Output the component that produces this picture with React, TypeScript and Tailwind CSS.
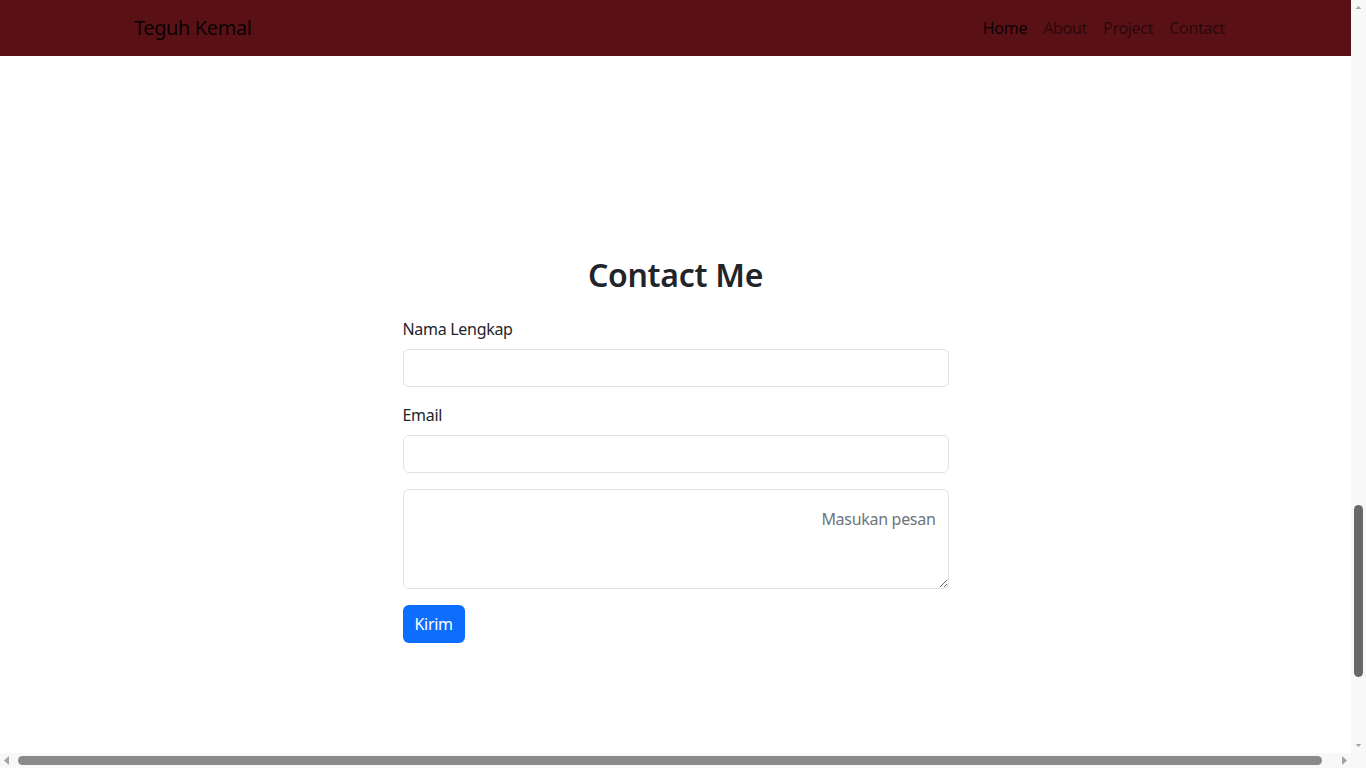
import React from "react";

export default function App() {
  const font = { fontFamily: '"Noto Sans", "Open Sans", sans-serif' };
  return (
    <div className="w-screen h-screen overflow-hidden flex flex-col bg-white" style={font}>
      <div className="flex flex-1 min-h-0">
        <div className="flex-1 flex flex-col min-w-0">
          <nav className="h-[56px] bg-[#5a1116] flex items-center justify-between pl-[134px] pr-[118px]">
            <span className="text-[20px] text-black/90 leading-none tracking-[-0.4px]">Teguh Kemal</span>
            <div className="flex text-[16px] tracking-[-0.3px]">
              <a className="px-2 text-black/90">Home</a>
              <a className="px-2 text-black/[0.55]">About</a>
              <a className="px-2 text-black/[0.55]">Project</a>
              <a className="px-2 text-black/[0.55]">Contact</a>
            </div>
          </nav>
          <main className="flex justify-center pt-[200px]">
            <div className="w-[546px] flex flex-col">
              <h2 className="text-[32px] leading-[1.2] font-semibold text-[#212529] text-center mb-[23px] tracking-[-0.3px]">Contact Me</h2>
              <label className="text-[16px] leading-[24px] text-[#212529] mb-2 tracking-[-0.3px]">Nama Lengkap</label>
              <input className="h-[38px] border border-[#dee2e6] rounded-[6px] mb-4 px-3 outline-none" />
              <label className="text-[16px] leading-[24px] text-[#212529] mb-2 tracking-[-0.3px]">Email</label>
              <input className="h-[38px] border border-[#dee2e6] rounded-[6px] mb-4 px-3 outline-none" />
              <textarea
                placeholder="Masukan pesan"
                className="h-[100px] border border-[#dee2e6] rounded-[6px] mb-4 pl-3 pr-3 pt-[17px] text-right text-[16px] leading-[24px] tracking-[-0.3px] placeholder:text-[#6c757d] outline-none"
              />
              <div>
                <button className="h-[38px] px-3 bg-[#0d6efd] text-white text-[16px] rounded-[6px] tracking-[-0.3px]">Kirim</button>
              </div>
            </div>
          </main>
        </div>
        <div className="w-[15px] bg-[#f8f8f8] flex flex-col items-center justify-between py-[6px]">
          <svg width="9" height="5" viewBox="0 0 9 5"><polygon points="0,5 4.5,0 9,5" fill="#a3a3a3" /></svg>
          <div className="flex-1 w-full flex flex-col items-center pt-[496px] pb-[67px]">
            <div className="w-[9px] h-[172px] rounded-full bg-[#686868]" />
          </div>
          <svg width="9" height="5" viewBox="0 0 9 5"><polygon points="0,0 9,0 4.5,5" fill="#a3a3a3" /></svg>
        </div>
      </div>
      <div className="h-[15px] flex">
        <div className="flex-1 bg-[#f8f8f8] flex items-center px-[4px] gap-[9px]">
          <svg width="5" height="9" viewBox="0 0 5 9"><polygon points="5,0 0,4.5 5,9" fill="#a3a3a3" /></svg>
          <div className="flex-1 h-[9px] rounded-full bg-[#8a8a8a] mr-[11px]" />
          <svg width="5" height="9" viewBox="0 0 5 9"><polygon points="0,0 5,4.5 0,9" fill="#a3a3a3" /></svg>
        </div>
        <div className="w-[15px] bg-[#f8f8f8]" />
      </div>
    </div>
  );
}
